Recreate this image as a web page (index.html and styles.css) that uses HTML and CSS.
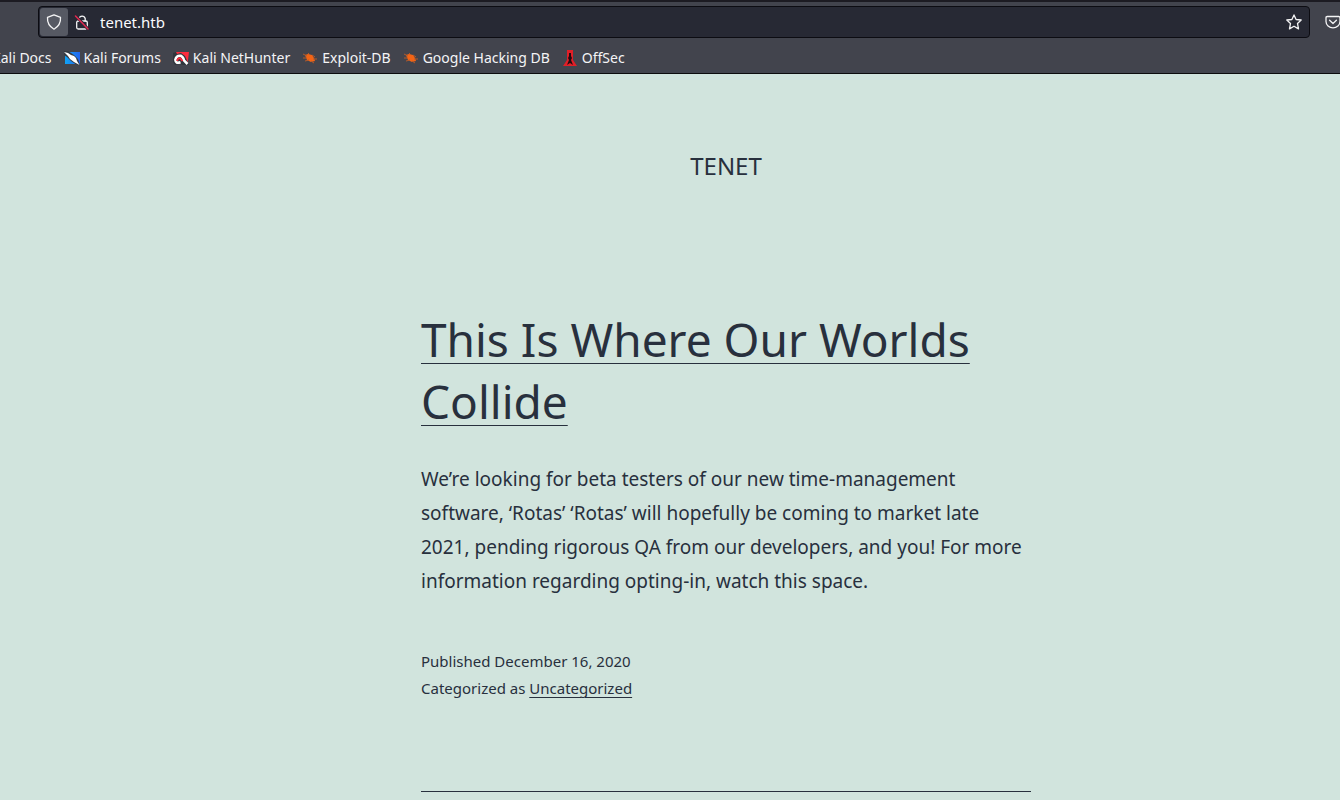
FILE: index.html
```html
<!DOCTYPE html>
<html lang="en">
<head>
<meta charset="utf-8">
<title>Tenet</title>
<link rel="stylesheet" href="styles.css">
</head>
<body>
<div class="browser">
  <div class="toolbar">
    <div class="urlbar">
      <button class="shield" aria-label="Tracking protection"><svg width="16" height="16" viewBox="0 0 16 16"><path d="M8 .8 L14.500 3.300 C14.900 8.800 12.400 12.700 8 15.200 C3.600 12.700 1.100 8.800 1.500 3.300 Z"/></svg></button>
      <button class="icon-button" aria-label="Connection not secure"><svg width="16" height="16" viewBox="0 0 16 16"><path d="M5 7 V4.500 A3.200 3.200 0 0 1 11.200 4.500 V7"/><rect x="2.700" y="7" width="10.600" height="8" rx="1.500"/><path class="strike-gap" d="M2 2 L14 15"/><path class="strike" d="M1.500 2 L14 15"/></svg></button>
      <input class="address" type="text" value="tenet.htb" aria-label="Address">
      <button class="icon-button" aria-label="Bookmark this page"><svg width="16" height="16" viewBox="0 0 16 16"><path d="M8 .9 L10.100 5.500 L15.200 6 L11.500 9.400 L12.500 14.900 L8 12.200 L3.500 14.900 L4.500 9.400 L.8 6 L5.900 5.500 Z"/></svg></button>
    </div>
    <button class="icon-button pocket" aria-label="Save to Pocket"><svg width="16" height="16" viewBox="0 0 16 16"><path d="M2.300 2.500 H13.700 Q15 2.500 15 3.800 V7.500 A7 6.300 0 0 1 1 7.500 V3.800 Q1 2.500 2.300 2.500 Z M4.600 6.300 L8 9.500 L11.400 6.300"/></svg></button>
  </div>
  <nav class="bookmarks" aria-label="Bookmarks">
    <a href="#">Kali Docs</a>
    <a href="#"><svg width="16" height="16" viewBox="0 0 16 16"><defs><linearGradient id="blue"><stop stop-color="#10a4f5"/><stop offset="1" stop-color="#2465ee"/></linearGradient></defs><path fill="url(#blue)" d="M1 2 H16 V14 H1 Z"/><path fill="#353a42" d="M0 1 L4 1 L10 5 L14 9 L16 15 L13 15 L7 11 L3 7 L0 5 Z"/><path fill="#fff" d="M0 2 L4 3 L7 5 L10 6 L12 8 L13 11 L15.500 15 L10 12 L6 9 L4 6 Z"/></svg>Kali Forums</a>
    <a href="#"><svg width="16" height="16" viewBox="0 0 16 16"><path fill="#ff2b3d" d="M3 2 H16 L14.500 14 H2 Z"/><path fill="#30353c" d="M0 3 L3 2 L4 4 L8 3 L12 6 L16 15 L10 15 L7 14 L2 15 L0 12 Z"/><path fill="none" stroke="#fff" stroke-width="2.500" d="M7.500 12.200 Q2.500 14 2.300 9.800 Q3.500 5 8 5.800 Q10.500 7 11 10.500 L14.500 14"/><path fill="none" stroke="#ff2b3d" stroke-width="1.800" d="M4.300 11 Q4.300 8 7.200 8.200 L9.500 11"/></svg>Kali NetHunter</a>
    <a href="#"><svg width="16" height="16" viewBox="0 0 16 16"><path fill="#f26415" d="M3 5 L6 4 L10 5 L12 8 L13 11 L9 12 L5 10 Z"/><path fill="none" stroke="#b45a2b" d="M1 4 L5 6 M1 8 L5 8 M3 11 L7 10 M6 3 L8 5 M10 5 L13 7 M11 9 L15 9 M9 11 L12 13"/></svg>Exploit-DB</a>
    <a href="#"><svg width="16" height="16" viewBox="0 0 16 16"><path fill="#f26415" d="M3 5 L6 4 L10 5 L12 8 L13 11 L9 12 L5 10 Z"/><path fill="none" stroke="#b45a2b" d="M1 4 L5 6 M1 8 L5 8 M3 11 L7 10 M6 3 L8 5 M10 5 L13 7 M11 9 L15 9 M9 11 L12 13"/></svg>Google Hacking DB</a>
    <a href="#"><svg width="16" height="16" viewBox="0 0 16 16"><path fill="#e01f27" d="M5 0 H11 V10 L15 16 H1 L5 10 Z"/><path fill="#210b10" d="M7 3 H9 V6 L10 8 L9 10 L11 15 L8 13 L5 15 L7 10 L6 8 L7 6 Z"/></svg>OffSec</a>
  </nav>
</div>
<div class="page">
  <header><h1 class="site-title">TENET</h1></header>
  <main>
    <article class="post">
      <h2 class="post-title"><a href="#">This Is Where Our Worlds Collide</a></h2>
      <p class="excerpt">We’re looking for beta testers of our new time-management software, ‘Rotas’ ‘Rotas’ will hopefully be coming to market late 2021, pending rigorous QA from our developers, and you! For more information regarding opting-in, watch this space.</p>
      <footer class="meta">
        <div>Published <time datetime="2020-12-16">December 16, 2020</time></div>
        <div>Categorized as <a href="#">Uncategorized</a></div>
      </footer>
    </article>
  </main>
</div>
</body>
</html>
```
FILE: styles.css
```css
* { box-sizing: border-box; }
html { background: #d1e4dd; }
body { margin: 0; overflow-x: hidden; color: #28303d; font-family: "Noto Sans", sans-serif; }
svg { display: block; flex: none; }
.browser { background: #42444d; border-top: 2px solid #1c1b22; border-bottom: 1px solid #0c0c0d; overflow: hidden; }
.toolbar { display: flex; align-items: center; padding: 4px 0 4px 38px; }
.urlbar { flex: 1; display: flex; align-items: center; height: 32px; padding: 1px 7px 1px 1px; background: #272934; border: 1px solid #0c0c12; border-radius: 4px; }
button { border: 0; background: none; margin: 0; padding: 0; }
button svg { fill: none; stroke: #f4f4f5; stroke-width: 1.3; stroke-linejoin: round; stroke-linecap: round; }
.shield { display: grid; place-items: center; width: 28px; height: 28px; background: #565963; border-radius: 3px; }
.shield + .icon-button { margin-left: 6px; }
.icon-button .strike-gap { stroke: #272934; stroke-width: 3; }
.icon-button .strike { stroke: #e22850; stroke-width: 1.5; }
.address { flex: 1; min-width: 0; padding: 0 10px; border: 0; outline: 0; background: none; color: #fbfbfe; font: 15px/20px "Noto Sans", sans-serif; }
.pocket { margin: 0 -1px 0 15px; }
.bookmarks { display: flex; align-items: center; gap: 12px; height: 31px; margin-left: -8px; white-space: nowrap; }
.bookmarks a { display: flex; align-items: center; gap: 4px; color: #f4f4f6; font-size: 14px; line-height: 20px; text-decoration: none; }
.page { padding: 72px 0 0 112px; }
.page header, .page main { width: min(610px, 100% - 40px); margin: 0 auto; }
.site-title { margin: 0; font-size: 24px; line-height: 40px; font-weight: 400; text-align: center; }
.post { margin-top: 122px; padding-bottom: 89px; border-bottom: 1px solid #28303d; }
.post a { color: inherit; text-decoration-thickness: 1px; }
.post-title { margin: 0; font-size: 46px; line-height: 62px; font-weight: 400; }
.post-title a { text-underline-offset: 6px; }
.excerpt { margin: 30px 0 0; font-size: 19px; line-height: 34px; }
.meta { margin-top: 50px; font-size: 15px; line-height: 27px; }
.meta a { text-underline-offset: 3px; }
```
